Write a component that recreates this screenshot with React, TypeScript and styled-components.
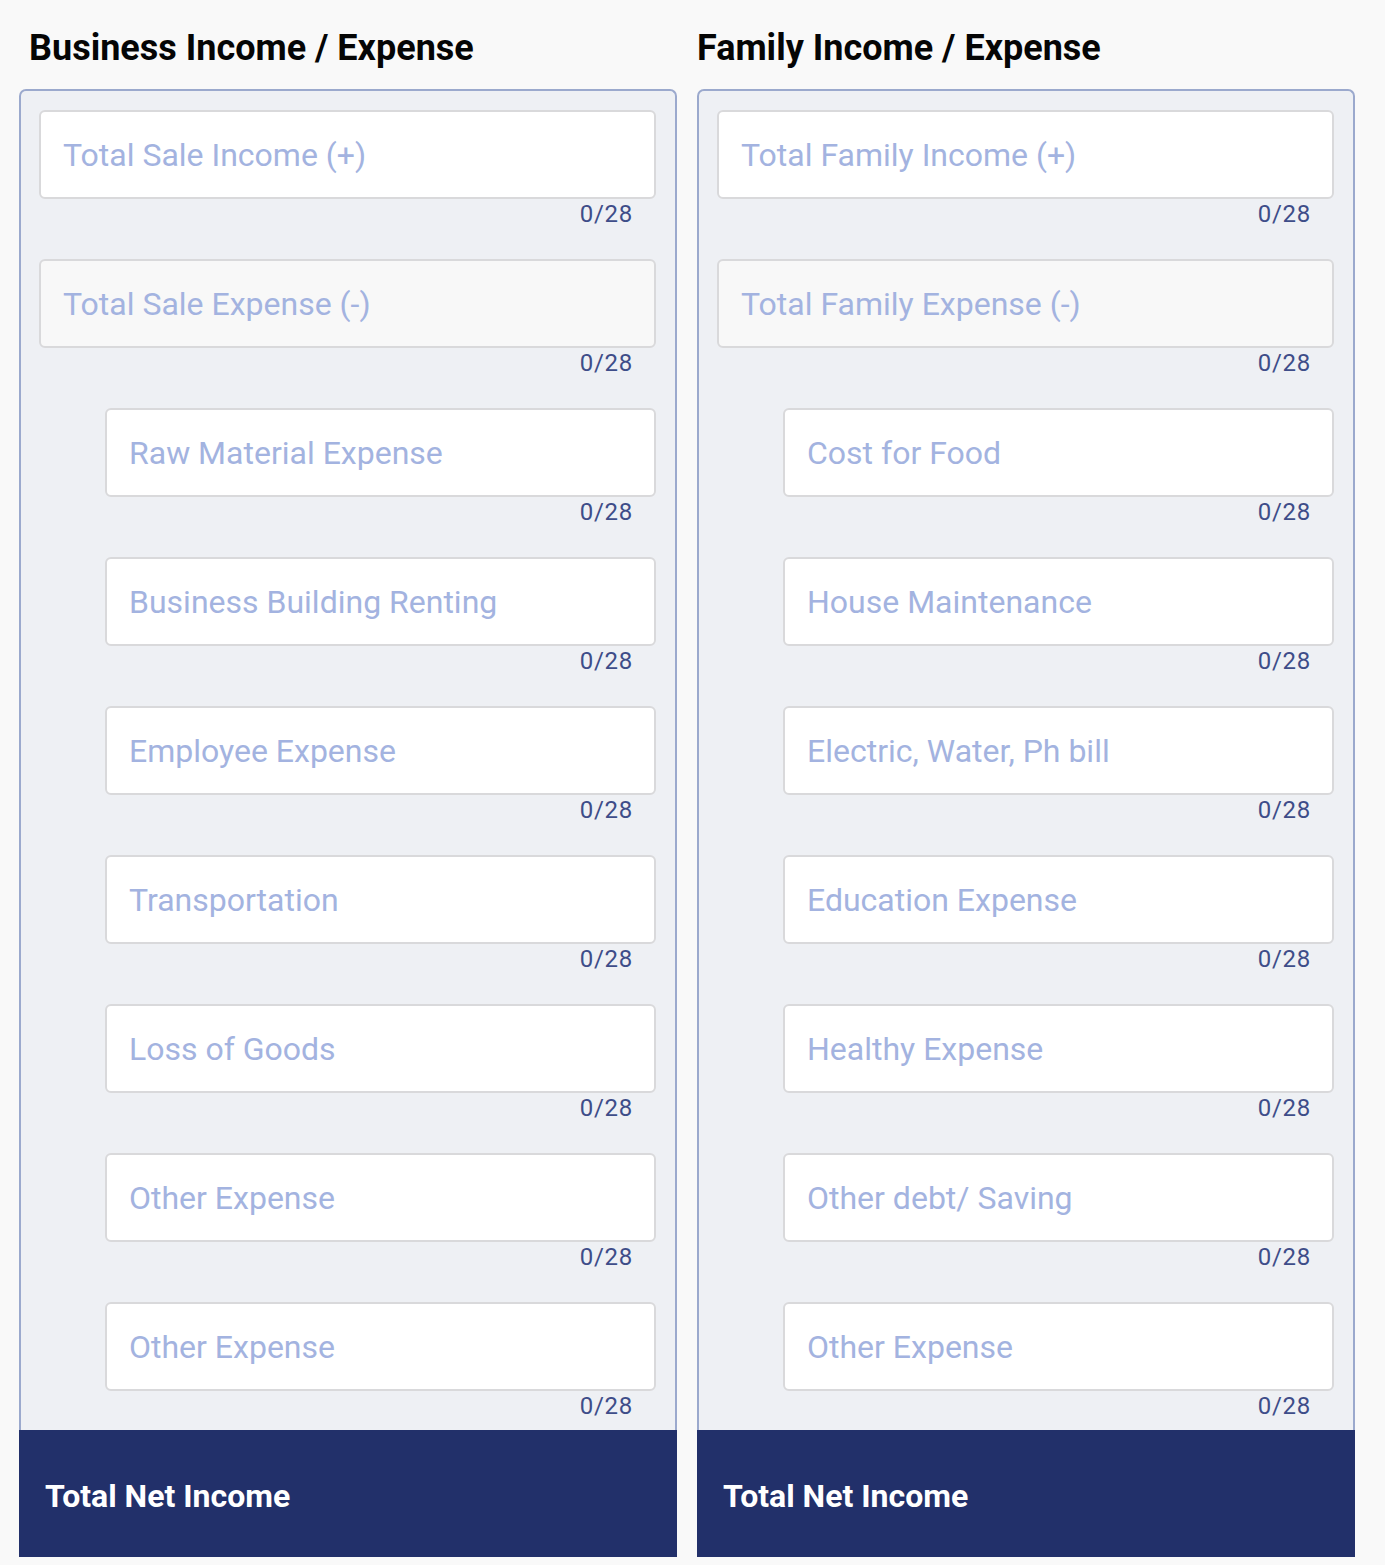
import React from "react";
import styled, { createGlobalStyle } from "styled-components";

const Global = createGlobalStyle`
  html, body { margin: 0; padding: 0; background: #f9f9f9; }
  body { font-family: Roboto, "Noto Sans", "Liberation Sans", sans-serif; }
  * { box-sizing: border-box; }
`;

const Page = styled.div`
  display: grid;
  grid-template-columns: 658px 658px;
  column-gap: 20px;
  padding: 0 0 8px 19px;
`;

const Column = styled.section`
  display: flex;
  flex-direction: column;
`;

const Heading = styled.h2<{ $offset: number }>`
  margin: 0;
  height: 89px;
  padding: 28px 0 0 ${(p) => p.$offset}px;
  font-size: 36px;
  line-height: 40px;
  font-weight: 700;
  color: #050505;
  white-space: nowrap;
`;

const Panel = styled.div`
  display: flex;
  flex-direction: column;
  gap: 30px;
  background: #eef0f4;
  border: 2px solid #9ba9cd;
  border-bottom: none;
  border-radius: 7px 7px 0 0;
  padding: 19px 19px 9px 18px;
`;

const Field = styled.div<{ $indent?: boolean }>`
  display: flex;
  flex-direction: column;
  padding-left: ${(p) => (p.$indent ? "66px" : "0")};
`;

const Input = styled.input<{ $muted?: boolean }>`
  height: 89px;
  width: 100%;
  border: 2px solid #d9d9db;
  border-radius: 6px;
  background: ${(p) => (p.$muted ? "#f8f8f8" : "#ffffff")};
  padding: 0 0 0 22px;
  font-family: Roboto, "Noto Sans", sans-serif;
  font-size: 32px;
  color: #333;
  outline: none;
  &::placeholder {
    color: #a3b3e0;
    opacity: 1;
  }
`;

const Counter = styled.div`
  height: 30px;
  line-height: 30px;
  text-align: right;
  padding-right: 23px;
  font-size: 24px;
  letter-spacing: 0.7px;
  color: #3e4d89;
`;

const Footer = styled.div`
  height: 127px;
  background: #22306a;
  display: flex;
  align-items: center;
  padding: 5px 0 0 26px;
  color: #ffffff;
  font-size: 32px;
  font-weight: 700;
`;

type Item = { label: string; indent?: boolean; muted?: boolean };

const business: Item[] = [
  { label: "Total Sale Income (+)" },
  { label: "Total Sale Expense (-)", muted: true },
  { label: "Raw Material Expense", indent: true },
  { label: "Business Building Renting", indent: true },
  { label: "Employee Expense", indent: true },
  { label: "Transportation", indent: true },
  { label: "Loss of Goods", indent: true },
  { label: "Other Expense", indent: true },
  { label: "Other Expense", indent: true },
];

const family: Item[] = [
  { label: "Total Family Income (+)" },
  { label: "Total Family Expense (-)", muted: true },
  { label: "Cost for Food", indent: true },
  { label: "House Maintenance", indent: true },
  { label: "Electric, Water, Ph bill", indent: true },
  { label: "Education Expense", indent: true },
  { label: "Healthy Expense", indent: true },
  { label: "Other debt/ Saving", indent: true },
  { label: "Other Expense", indent: true },
];

function Section({
  title,
  items,
  offset,
}: {
  title: string;
  items: Item[];
  offset: number;
}) {
  return (
    <Column>
      <Heading $offset={offset}>{title}</Heading>
      <Panel>
        {items.map((it, i) => (
          <Field key={i} $indent={it.indent}>
            <Input placeholder={it.label} $muted={it.muted} maxLength={28} />
            <Counter>0/28</Counter>
          </Field>
        ))}
      </Panel>
      <Footer>Total Net Income</Footer>
    </Column>
  );
}

export default function App() {
  return (
    <>
      <Global />
      <Page>
        <Section title="Business Income / Expense" items={business} offset={10} />
        <Section title="Family Income / Expense" items={family} offset={0} />
      </Page>
    </>
  );
}
